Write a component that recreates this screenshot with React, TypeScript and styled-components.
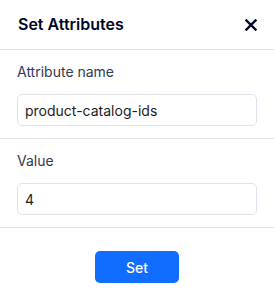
import styled, { createGlobalStyle } from "styled-components";

const GlobalStyle = createGlobalStyle`
  body {
    margin: 0;
    background: #ffffff;
    font-family: "Inter", "Noto Sans", sans-serif;
    color: #162d3d;
  }
`;

export default function App() {
  return (
    <>
      <GlobalStyle />
      <Panel>
        <Header>
          <Title>Set Attributes</Title>
          <CloseButton aria-label="Close">
            <svg width="12" height="12" viewBox="0 0 12 12">
              <path
                d="M1.5 1.5 L10.5 10.5 M10.5 1.5 L1.5 10.5"
                stroke="#000624"
                strokeWidth="2.4"
                strokeLinecap="square"
              />
            </svg>
          </CloseButton>
        </Header>
        <Section>
          <Label>Attribute name</Label>
          <Field defaultValue="product-catalog-ids" />
        </Section>
        <Section>
          <Label>Value</Label>
          <Field defaultValue="4" />
        </Section>
        <Footer>
          <PrimaryButton>Set</PrimaryButton>
        </Footer>
      </Panel>
    </>
  );
}

const Panel = styled.div`
  width: 274px;
  height: 294px;
  display: flex;
  flex-direction: column;
  overflow: hidden;
`;

const Header = styled.div`
  box-sizing: border-box;
  height: 50px;
  display: flex;
  align-items: center;
  justify-content: space-between;
  padding: 0 17px 0 18px;
  border-bottom: 1px solid #e2e2e2;
`;

const Title = styled.h1`
  margin: 0;
  font-size: 16px;
  font-weight: 600;
  line-height: 20px;
  color: #000624;
  padding-bottom: 1px;
`;

const CloseButton = styled.button`
  border: none;
  background: none;
  padding: 0;
  width: 12px;
  height: 12px;
  display: flex;
  cursor: pointer;
`;

const Section = styled.div`
  display: flex;
  flex-direction: column;
  gap: 12px;
  padding: 12px 17px;
  border-bottom: 1px solid #e2e2e2;
`;

const Label = styled.label`
  font-size: 14px;
  line-height: 20px;
  color: #333853;
`;

const Field = styled.input`
  box-sizing: border-box;
  width: 100%;
  height: 32px;
  padding: 0 7px;
  border: 1px solid #dfe3ec;
  border-radius: 5px;
  font-family: inherit;
  font-size: 14px;
  color: #1c1c1c;
  outline: none;
`;

const Footer = styled.div`
  display: flex;
  justify-content: center;
  padding-top: 23px;
`;

const PrimaryButton = styled.button`
  width: 84px;
  height: 32px;
  border: none;
  border-radius: 5px;
  background: #116dff;
  color: #ffffff;
  font-family: inherit;
  font-size: 14px;
  font-weight: 500;
  cursor: pointer;
`;
